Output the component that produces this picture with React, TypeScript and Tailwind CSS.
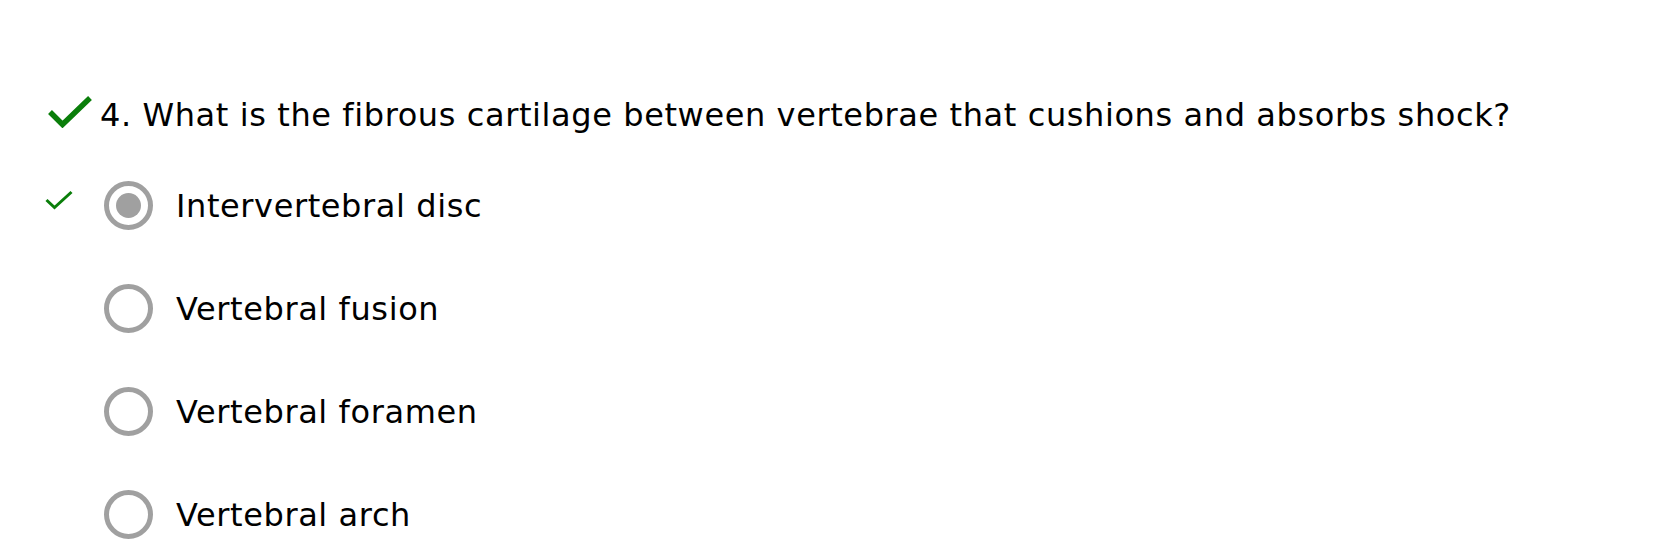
import React from "react";

const options = [
  { label: "Intervertebral disc", selected: true, correct: true },
  { label: "Vertebral fusion", selected: false, correct: false },
  { label: "Vertebral foramen", selected: false, correct: false },
  { label: "Vertebral arch", selected: false, correct: false },
];

function BigCheck() {
  return (
    <svg width="44" height="32" viewBox="0 0 44 32" className="shrink-0 self-start mt-[1px]">
      <path d="M2 16 L14.5 28.5 L42 2" fill="none" stroke="#0a7e0a" strokeWidth="5.5" strokeLinecap="butt" strokeLinejoin="miter" />
    </svg>
  );
}

function SmallCheck() {
  return (
    <svg width="28" height="20" viewBox="0 0 28 20" className="mb-[12px]">
      <path d="M1.5 10 L9.5 17.5 L26.5 2" fill="none" stroke="#0a7e0a" strokeWidth="3" />
    </svg>
  );
}

export default function App() {
  return (
    <div
      className="w-[1680px] h-[560px] overflow-hidden bg-white text-black"
      style={{ fontFamily: '"DejaVu Sans", Verdana, sans-serif' }}
    >
      <div className="pt-[95px] pl-[48px]">
        <div className="flex items-center h-[40px] gap-[8px]">
          <BigCheck />
          <div className="text-[32px] leading-[40px] tracking-[0.6px] whitespace-nowrap">
            4. What is the fibrous cartilage between vertebrae that cushions and absorbs shock?
          </div>
        </div>
        <div className="mt-[19px] flex flex-col -ml-[3px]">
          {options.map((o) => (
            <div key={o.label} className="flex items-center h-[103px]">
              <div className="w-[59px] flex justify-start">
                {o.correct ? <SmallCheck /> : null}
              </div>
              <div className="w-[49px] h-[49px] rounded-full border-[5px] border-[#a0a0a0] flex items-center justify-center shrink-0">
                {o.selected ? <div className="w-[25px] h-[25px] rounded-full bg-[#a0a0a0]" /> : null}
              </div>
              <div className="ml-[23px] text-[32px] leading-[40px] tracking-[0.6px] whitespace-nowrap">{o.label}</div>
            </div>
          ))}
        </div>
      </div>
    </div>
  );
}
